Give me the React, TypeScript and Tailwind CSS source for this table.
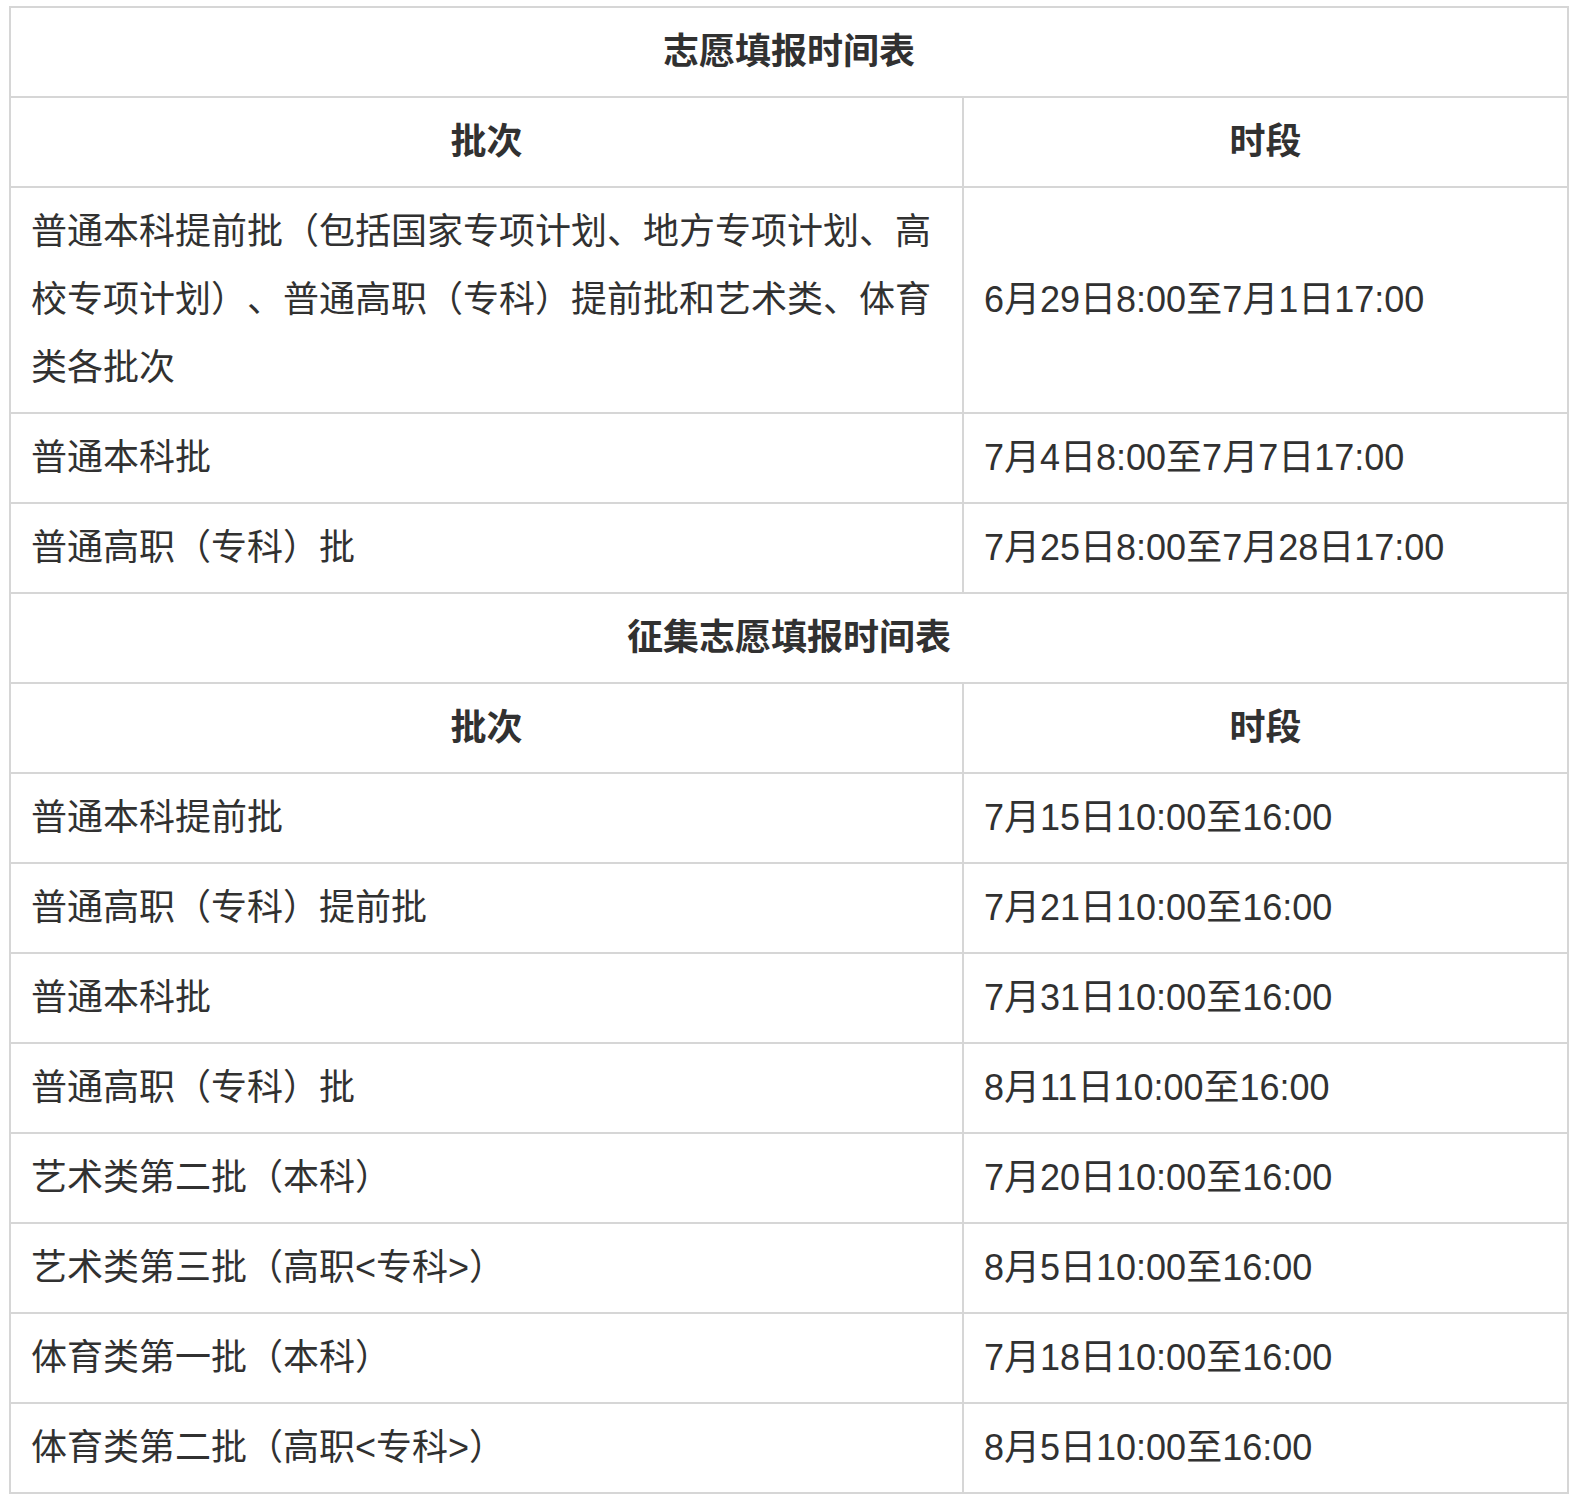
const FIRST_ROWS: [string, string][] = [
  [
    "普通本科提前批（包括国家专项计划、地方专项计划、高校专项计划）、普通高职（专科）提前批和艺术类、体育类各批次",
    "6月29日8:00至7月1日17:00",
  ],
  ["普通本科批", "7月4日8:00至7月7日17:00"],
  ["普通高职（专科）批", "7月25日8:00至7月28日17:00"],
];

const SECOND_ROWS: [string, string][] = [
  ["普通本科提前批", "7月15日10:00至16:00"],
  ["普通高职（专科）提前批", "7月21日10:00至16:00"],
  ["普通本科批", "7月31日10:00至16:00"],
  ["普通高职（专科）批", "8月11日10:00至16:00"],
  ["艺术类第二批（本科）", "7月20日10:00至16:00"],
  ["艺术类第三批（高职<专科>）", "8月5日10:00至16:00"],
  ["体育类第一批（本科）", "7月18日10:00至16:00"],
  ["体育类第二批（高职<专科>）", "8月5日10:00至16:00"],
];

const cell = "border-2 border-[#d6d6d6] px-5 py-[10px] align-middle";

function Section({ title, rows }: { title: string; rows: [string, string][] }) {
  return (
    <>
      <tr>
        <td colSpan={2} className={`${cell} text-center font-bold`}>
          {title}
        </td>
      </tr>
      <tr>
        <td className={`${cell} text-center font-bold`}>批次</td>
        <td className={`${cell} text-center font-bold`}>时段</td>
      </tr>
      {rows.map(([batch, time]) => (
        <tr key={batch + time}>
          <td className={cell}>{batch}</td>
          <td className={cell}>{time}</td>
        </tr>
      ))}
    </>
  );
}

export default function App() {
  return (
    <div className="min-h-screen bg-white pt-[6px] pl-[9px] font-['Liberation_Sans','Noto_Sans_CJK_SC',sans-serif] text-[36px] leading-[68px] text-[#313131] [text-spacing-trim:space-all]">
      <table className="w-[1560px] table-fixed border-collapse">
        <colgroup>
          <col className="w-[953px]" />
          <col />
        </colgroup>
        <tbody>
          <Section title="志愿填报时间表" rows={FIRST_ROWS} />
          <Section title="征集志愿填报时间表" rows={SECOND_ROWS} />
        </tbody>
      </table>
    </div>
  );
}
